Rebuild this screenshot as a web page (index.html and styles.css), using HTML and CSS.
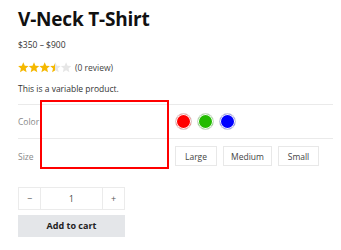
FILE: index.html
```html
<!DOCTYPE html>
<html lang="en">
<head>
    <meta charset="UTF-8">
    <meta name="viewport" content="width=device-width, initial-scale=1.0">
    <title>V-Neck T-Shirt</title>
    <link rel="stylesheet" href="styles.css">
</head>
<body>
    <div class="product">
        <h1 class="title">V-Neck T-Shirt</h1>
        <p class="price">$350 – $900</p>

        <div class="rating">
            <svg class="stars" width="54" height="11" viewBox="0 0 54 11">
                <defs>
                    <polygon id="star" points="5.3,0.3 6.8,3.7 10.5,4 7.7,6.4 8.6,10.2 5.3,8.2 2,10.2 2.9,6.4 0.1,4 3.8,3.7"/>
                    <linearGradient id="half">
                        <stop offset="50%" stop-color="#f5b800"/>
                        <stop offset="50%" stop-color="#e6e6e6"/>
                    </linearGradient>
                </defs>
                <use href="#star" x="0" fill="#f5b800"/>
                <use href="#star" x="10.7" fill="#f5b800"/>
                <use href="#star" x="21.4" fill="#f5b800"/>
                <use href="#star" x="32.1" fill="url(#half)"/>
                <use href="#star" x="42.8" fill="#e6e6e6"/>
            </svg>
            <span class="review-count">(0 review)</span>
        </div>

        <p class="desc">This is a variable product.</p>

        <table class="variations">
            <tr>
                <th>Color</th>
                <td>
                    <div class="swatches">
                        <span class="swatch red"></span>
                        <span class="swatch green"></span>
                        <span class="swatch blue"></span>
                    </div>
                </td>
            </tr>
            <tr>
                <th>Size</th>
                <td>
                    <div class="sizes">
                        <button class="size-btn">Large</button>
                        <button class="size-btn">Medium</button>
                        <button class="size-btn">Small</button>
                    </div>
                </td>
            </tr>
        </table>

        <div class="cart">
            <div class="qty">
                <button class="qty-btn">−</button>
                <input class="qty-input" type="text" value="1">
                <button class="qty-btn">+</button>
            </div>
            <button class="add-btn">Add to cart</button>
        </div>

        <div class="highlight"></div>
    </div>
</body>
</html>
```

FILE: styles.css
```css
* {
    box-sizing: border-box;
    font-family: 'Open Sans', 'Noto Sans', sans-serif;
}

body {
    margin: 0;
    background: #fff;
    color: #333;
}

.product {
    position: relative;
    padding: 0 8px 0 18px;
}

.title {
    margin: 0;
    padding-top: 5px;
    font-size: 19px;
    line-height: 28px;
    font-weight: 700;
    color: #111;
    letter-spacing: -0.2px;
}

.price {
    margin: 6px 0 0;
    font-size: 8.5px;
    line-height: 12px;
    color: #333;
}

.rating {
    display: flex;
    align-items: center;
    gap: 3px;
    margin-top: 10px;
    height: 12px;
}

.stars {
    display: block;
}

.review-count {
    font-size: 8.5px;
    color: #444;
}

.desc {
    margin: 10px 0 0;
    font-size: 8.5px;
    line-height: 12px;
    color: #333;
}

.variations {
    width: 100%;
    margin-top: 9px;
    border-collapse: collapse;
}

.variations th,
.variations td {
    padding: 0;
    border-top: 1px solid #eaeaea;
    vertical-align: middle;
}

.variations th {
    width: 157px;
    text-align: left;
    font-weight: 400;
    font-size: 8.5px;
    color: #888;
}

.variations tr:first-child th,
.variations tr:first-child td {
    height: 34px;
}

.variations tr:last-child th,
.variations tr:last-child td {
    height: 35px;
}

.swatches {
    display: flex;
    gap: 5px;
}

.swatch {
    width: 17px;
    height: 17px;
    border-radius: 50%;
    border: 1px solid #ddd;
    box-shadow: inset 0 0 0 1px #fff;
}

.red { background: #ff0000; }
.green { background: #22bb00; }
.blue { background: #0000ff; }

.sizes {
    display: flex;
    gap: 6px;
}

.size-btn {
    height: 20px;
    padding: 0;
    background: #fff;
    border: 1px solid #e8e8e8;
    font-size: 8.5px;
    color: #444;
}

.size-btn:first-child { width: 42px; }
.size-btn:nth-child(2) { width: 49px; }
.size-btn:nth-child(3) { width: 41px; }

.cart {
    margin-top: 13px;
    width: 107px;
}

.qty {
    display: flex;
    height: 23px;
    border: 1px solid #ebebeb;
}

.qty-btn {
    width: 21px;
    padding: 0;
    background: #fff;
    border: none;
    font-size: 9px;
    color: #555;
}

.qty-input {
    flex: 1;
    min-width: 0;
    border: none;
    border-left: 1px solid #ebebeb;
    border-right: 1px solid #ebebeb;
    text-align: center;
    font-size: 8.5px;
    color: #444;
    outline: none;
}

.add-btn {
    display: block;
    width: 100%;
    height: 22px;
    margin-top: 5px;
    background: #e4e6e9;
    border: none;
    font-size: 9px;
    font-weight: 700;
    color: #222;
}

.highlight {
    position: absolute;
    left: 40px;
    top: 100px;
    width: 129px;
    height: 69px;
    border: 2px solid #ff0000;
}
```
